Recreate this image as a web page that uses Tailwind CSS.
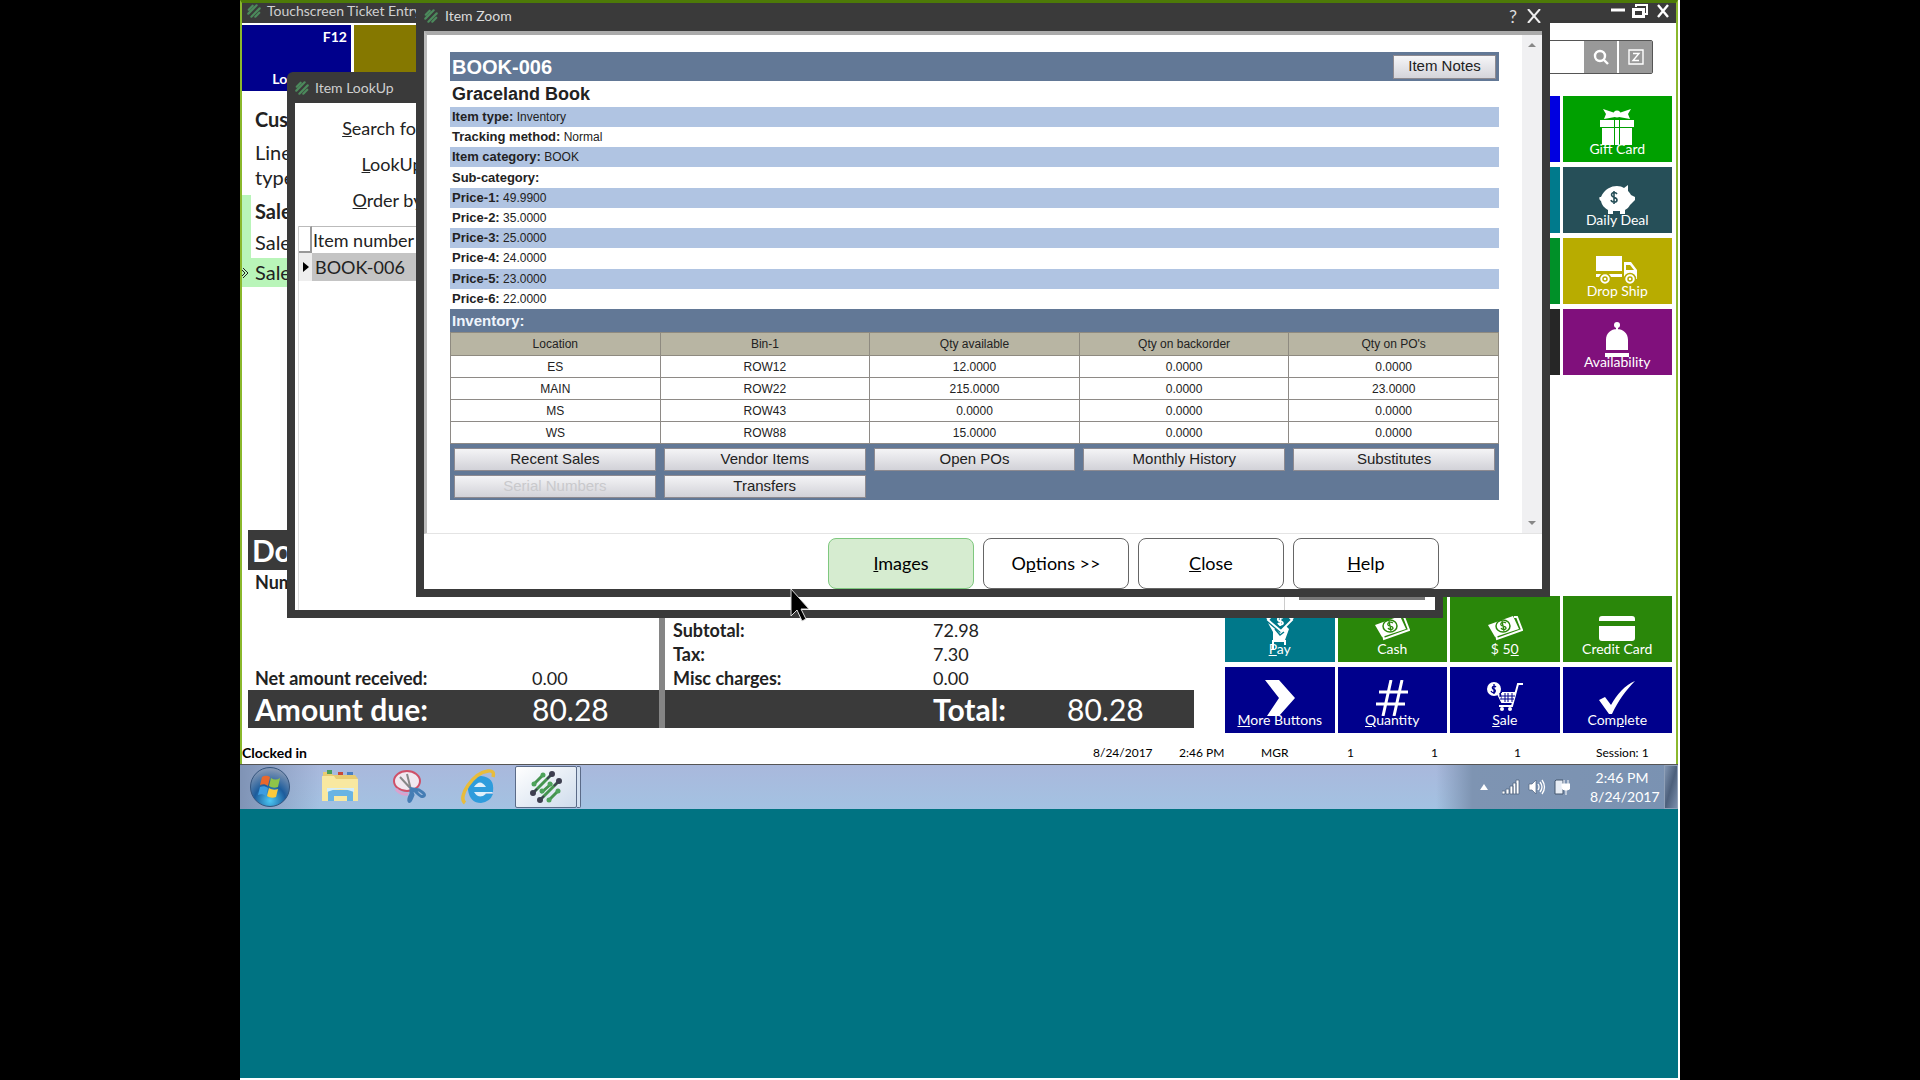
<!DOCTYPE html>
<html lang="en">
<head>
    <meta charset="UTF-8">
    <meta name="viewport" content="width=device-width, initial-scale=1.0">
    <title>Touchscreen Ticket Entry</title>
    <script src="https://cdn.jsdelivr.net/npm/@tailwindcss/browser@4"></script>
</head>
<body class="bg-black font-['Lato',sans-serif] text-[#222]">
    <!-- Shared icons -->
    <svg class="hidden">
        <symbol id="logo" viewBox="0 0 32 32">
            <g stroke="#45944f" stroke-width="3" stroke-linecap="round">
                <path d="M13 4L4 13M22 3L3 22M21 13L12 21M29 10L10 29M28 20l-9 9"/>
            </g>
            <g fill="#4da35a"><circle cx="13" cy="4" r="2.500"/><circle cx="4" cy="13" r="2.500"/><circle cx="20" cy="13" r="2.500"/><circle cx="12" cy="20" r="2.500"/><circle cx="28" cy="20" r="2.500"/><circle cx="19" cy="29" r="2.500"/></g>
            <g fill="#3d3f50" stroke="#3d3f50" stroke-width="2"><circle cx="22" cy="3" r="2"/><circle cx="29" cy="10" r="2"/><circle cx="3" cy="22" r="2"/><circle cx="10" cy="29" r="2"/><path d="M22 3l-5 5M29 10l-5 5M3 22l4-4M10 29l4-4"/></g>
        </symbol>
        <symbol id="logo-small" viewBox="0 0 32 32">
            <path d="M13 4L4 13M22 3L3 22M29 10L10 29M28 20l-9 9" stroke="#4c8a5c" stroke-width="5" stroke-linecap="round"/>
        </symbol>
        <symbol id="bills" viewBox="0 0 36 26">
            <path d="M9 20l1 4 25-9-5-13-3 0" fill="none" stroke="#fff" stroke-width="2"/>
            <path d="M1 10L26 1l6 13-24 8z" fill="#fff"/>
            <ellipse cx="16" cy="11" rx="7" ry="6" fill="none" stroke="#2a870a" stroke-width="1.5"/>
            <path d="M19 8c-3-2-6 0-5 2s5 1 5 3-4 2-5 0M15 6l2 10" fill="none" stroke="#2a870a" stroke-width="1.3"/>
        </symbol>
    </svg>

    <div class="relative mx-auto flex h-screen w-3/4 flex-col border-r-2 border-b-2 border-white bg-[#007382]">

        <!-- Ticket entry window -->
        <div class="flex h-[764px] flex-col border-x-2 border-t-3 border-x-[#8ab82c] border-t-[#4d7a08] bg-white">
            <div class="flex h-5 shrink-0 items-center bg-[#3a3a3a] pb-1 text-[#cfcfcf]">
                <svg class="ml-[5px] h-3.5 w-3.5"><use href="#logo-small"/></svg>
                <h1 class="ml-1.5 flex-1 text-[14px] leading-4">Touchscreen Ticket Entry</h1>
                <button aria-label="Minimize" class="mr-1.5"><svg class="h-4 w-4" viewBox="0 0 16 16"><path d="M1 7h14" stroke="#fff" stroke-width="3"/></svg></button>
                <button aria-label="Restore" class="mr-2"><svg class="h-4 w-4" viewBox="0 0 16 16" fill="none" stroke="#fff"><path d="M4 4V2h11v9h-2" stroke-width="2"/><path d="M1.5 6.5h10v7h-10z" stroke-width="3"/></svg></button>
                <button aria-label="Exit" class="mr-1.5"><svg class="h-4 w-3.5" viewBox="0 0 14 16"><path d="M2 2l10 12M12 2L2 14" stroke="#fff" stroke-width="2.4"/></svg></button>
            </div>

            <div class="flex min-h-0 flex-1 gap-[3px] pt-0.5 pr-1">
                <div class="flex flex-1 flex-col pb-3">
                    <div class="flex h-[66px] gap-[3px]">
                        <button class="flex w-[109px] flex-col justify-between bg-[#00008c] pt-1 pb-1 text-[14px] leading-4 font-bold text-white">
                            <span class="self-end pr-1">F12</span>
                            <span class="self-center">LookUp</span>
                        </button>
                        <button aria-label="Item" class="w-[109px] bg-[#857800]"></button>
                    </div>
                    <p class="mt-4 pl-[13px] text-[20px] leading-6 font-bold">Customer</p>
                    <table class="mt-[9px] w-full border-separate border-spacing-0 text-left text-[20px]">
                        <thead>
                            <tr><th class="block w-16 pl-[13px] pb-[5px] leading-[25px] font-normal">Line type</th></tr>
                        </thead>
                        <tbody>
                            <tr><td class="h-8 border-l-9 border-[#b9f5b9] pl-1 leading-8 font-bold">Sale</td></tr>
                            <tr><td class="h-[31px] border-l-9 border-[#b9f5b9] pl-1 leading-[31px]">Sale</td></tr>
                            <tr><td class="flex h-[29px] items-center bg-[#b9f5b9] leading-[29px]">
                                <svg class="mr-1.5 h-3 w-[7px]" viewBox="0 0 7 12" fill="none" stroke="#222"><path d="M1 1l5 5-5 5M0 3l3 3-3 3"/></svg>Sale
                            </td></tr>
                        </tbody>
                    </table>

                    <!-- Totals -->
                    <div class="mt-auto mr-7 ml-1.5 grid h-[198px] grid-cols-[411fr_6px_529fr] text-[18px] leading-6">
                        <div class="flex flex-col">
                            <h2 class="h-10 bg-[#3a3a3a] pl-1 text-[30px] leading-10 font-bold text-white">Document</h2>
                            <p class="flex-1 pl-[7px] font-bold">Number of lines:</p>
                            <dl class="grid grid-cols-[277px_1fr] pl-[7px]">
                                <dt class="font-bold">Net amount received:</dt><dd>0.00</dd>
                            </dl>
                            <dl class="grid grid-cols-[277px_1fr] bg-[#3a3a3a] pl-[7px] text-[30px] leading-[38px] text-white">
                                <dt class="font-bold">Amount due:</dt><dd>80.28</dd>
                            </dl>
                        </div>
                        <div class="bg-[#858585]"></div>
                        <div class="flex flex-col justify-end">
                            <dl class="grid grid-cols-[260px_1fr] pl-2">
                                <dt class="font-bold">Subtotal:</dt><dd>72.98</dd>
                                <dt class="font-bold">Tax:</dt><dd>7.30</dd>
                                <dt class="font-bold">Misc charges:</dt><dd>0.00</dd>
                            </dl>
                            <dl class="grid grid-cols-[134px_1fr] bg-[#3a3a3a] pl-[268px] text-[30px] leading-[38px] text-white">
                                <dt class="font-bold">Total:</dt><dd>80.28</dd>
                            </dl>
                        </div>
                    </div>
                </div>

                <!-- Touch buttons -->
                <div class="flex w-[447px] flex-col pb-[7px] text-[14px] leading-4 text-white">
                    <div class="mt-[15px] mr-[19px] flex h-[34px] self-end rounded-xs border border-[#555] bg-white">
                        <input aria-label="Search" class="w-[180px] text-black">
                        <button aria-label="Find" class="flex w-[35px] items-center justify-center border-r-2 border-white bg-[#999]"><svg class="h-4 w-4" viewBox="0 0 16 16" fill="none" stroke="#fff" stroke-width="2.4"><circle cx="7" cy="7" r="5"/><path d="M11 11l4 4"/></svg></button>
                        <button aria-label="Zoom" class="flex w-[33px] items-center justify-center bg-[#999]"><svg class="h-4 w-4" viewBox="0 0 16 16" fill="none" stroke="#fff" stroke-width="1.4"><path d="M1 1h14v14H1zM5 4.500h6L5 11.500h6"/></svg></button>
                    </div>

                    <div class="mt-[22px] grid grid-cols-4 gap-x-[3px] gap-y-[5px]">
                        <button aria-label="Sale type" class="col-start-3 h-[66px] bg-[#0000e0]"></button>
                        <button class="flex h-[66px] flex-col items-center justify-end bg-[#00a000] pb-[5px]">
                            <svg class="-mb-1 h-9 w-9" viewBox="0 0 36 36" fill="#fff"><path d="M4 0l12 4v4L5 10 7 5zM32 0L20 4v4l11 2-2-5z"/><circle cx="18" cy="5" r="3.500"/><path d="M1 11h34v7H1zM3 19h30v17H3z"/><path d="M15.500 11v25M20.500 11v25" stroke="#00a000"/></svg>
                            <span>Gift Card</span>
                        </button>
                        <button aria-label="Order" class="col-start-3 h-[66px] bg-[#007a8c]"></button>
                        <button class="flex h-[66px] flex-col items-center justify-end bg-[#264f58] pb-[5px]">
                            <svg class="-mb-0.5 h-[29px] w-9" viewBox="0 0 36 29" fill="#fff"><path d="M1 12c-1 0-1 3 1 4 1 5 4 7 7 9v4h5v-3h7v3h5v-4c2-1 4-3 5-5l5-5v-3l-4-2c-1-2-2-3-3-4V0l-4 3C20-1 7 0 2 12z"/><path d="M18 9c-2-3-7-1-5 2 1 2 5 1 5 4s-5 3-6 0M15 6v13" fill="none" stroke="#264f58" stroke-width="1.600"/></svg>
                            <span>Daily Deal</span>
                        </button>
                        <button aria-label="Layaway" class="col-start-3 h-[66px] bg-[#009028]"></button>
                        <button class="flex h-[66px] flex-col items-center justify-end bg-[#b8ac00] pb-[5px]">
                            <svg class="-mb-0.5 h-[29px] w-[42px]" viewBox="0 0 42 29"><path d="M0 0h26v15H0zM0 18h26v3H0zM28 6h7l6 8v9H28z" fill="#fff"/><path d="M30 9h4l4 5h-8z" fill="#b8ac00"/><g fill="#fff" stroke="#b8ac00" stroke-width="1.500"><circle cx="9" cy="23" r="5.500"/><circle cx="34" cy="23" r="5.500"/><circle cx="9" cy="23" r="2"/><circle cx="34" cy="23" r="2"/></g></svg>
                            <span>Drop Ship</span>
                        </button>
                        <button aria-label="Tools" class="col-start-3 h-[66px] bg-[#262626]"></button>
                        <button class="flex h-[66px] flex-col items-center justify-end bg-[#80107c] pb-[5px]">
                            <svg class="-mb-1 h-9 w-6" viewBox="0 0 24 36" fill="#fff"><circle cx="12" cy="3" r="3"/><path d="M11 5h2v3h-2zM1 28V18C1 11 6 7 12 7s11 4 11 11v10zM0 31h24v4H0z"/></svg>
                            <span>Availability</span>
                        </button>
                    </div>

                    <div class="mt-auto grid grid-cols-4 gap-x-[3px] gap-y-[5px]">
                        <button class="flex h-[66px] flex-col items-center justify-end bg-[#00788a] pb-[5px]">
                            <svg class="-mb-2 h-[38px] w-7" viewBox="0 0 28 38" fill="none"><path d="M1 8l6-5M27 8l-6-6" stroke="#fff" stroke-width="3"/><path d="M7 3l7-2 7 2 5 6-11 11L2 9z" stroke="#fff" stroke-width="2"/><path d="M17 7c-3-2-6 0-5 2s5 1 5 3-4 2-5 0M15 4l-1 11" stroke="#fff" stroke-width="1.800"/><path d="M2 12l5 9v8h12l4-11-3-3-6 7z" fill="#fff"/><path d="M9 18l5 6 4-3" stroke="#00788a" stroke-width="1.500"/><path d="M6 30h14M7 30v8M19 30v4" stroke="#fff" stroke-width="2"/></svg>
                            <span><u>P</u>ay</span>
                        </button>
                        <button class="flex h-[66px] flex-col items-center justify-end bg-[#2a870a] pb-[5px]">
                            <svg class="h-[26px] w-9"><use href="#bills"/></svg>
                            <span>Cash</span>
                        </button>
                        <button class="flex h-[66px] flex-col items-center justify-end bg-[#2a870a] pb-[5px]">
                            <svg class="h-[26px] w-9"><use href="#bills"/></svg>
                            <span>$ 5<u>0</u></span>
                        </button>
                        <button class="flex h-[66px] flex-col items-center justify-end bg-[#2a870a] pb-[5px]">
                            <svg class="h-[25px] w-9" viewBox="0 0 36 25" fill="#fff"><path d="M0 5V3q0-3 3-3h30q3 0 3 3v2zM0 10h36v12q0 3-3 3H3q-3 0-3-3z"/></svg>
                            <span>Credit Card</span>
                        </button>
                        <button class="flex h-[66px] flex-col items-center justify-end bg-[#00008c] pb-[5px]">
                            <svg class="-mb-1 h-9 w-[30px]" viewBox="0 0 30 36" fill="#fff"><path d="M0 0h14l16 18-16 18H2l12-18z"/></svg>
                            <span><u>M</u>ore Buttons</span>
                        </button>
                        <button class="flex h-[66px] flex-col items-center justify-end bg-[#00008c] pb-[5px]">
                            <svg class="-mb-1 h-9 w-8" viewBox="0 0 32 36" fill="none" stroke="#fff" stroke-width="3"><path d="M15 0L7 36M26 0l-8 36M3 12h29M0 24h29"/></svg>
                            <span><u>Q</u>uantity</span>
                        </button>
                        <button class="flex h-[66px] flex-col items-center justify-end bg-[#00008c] pb-[5px]">
                            <svg class="h-[30px] w-9" viewBox="0 0 36 30"><circle cx="7" cy="7" r="7" fill="#fff"/><path d="M9 5c-2-2-5 0-3 2 2 1 3 1 2 3-1 1-3 1-4-1M7 2v10" fill="none" stroke="#00008c" stroke-width="1.300"/><path d="M36 2h-5l-6 22H12M15 11h13M11 12l4 8h11" fill="none" stroke="#fff" stroke-width="2"/><path d="M14 11h14l-2 9H15z" fill="#fff"/><path d="M12 14h16M13 17h14M18 11v9M21 11v9M25 11v9" stroke="#00008c"/><circle cx="15" cy="27" r="2" fill="#fff"/><circle cx="23" cy="27" r="2" fill="#fff"/></svg>
                            <span><u>S</u>ale</span>
                        </button>
                        <button class="flex h-[66px] flex-col items-center justify-end bg-[#00008c] pb-[5px]">
                            <svg class="-mb-0.5 h-[33px] w-9" viewBox="0 0 36 33" fill="#fff"><path d="M0 19l6-3 6 8C18 13 26 4 36 0 27 9 19 20 13 33h-3z"/></svg>
                            <span>Com<u>p</u>lete</span>
                        </button>
                    </div>
                </div>
            </div>

            <div class="grid h-6 grid-cols-[1fr_86px_82px_86px_84px_83px_82px_80px] items-center pt-0.5 text-[12px] leading-5 text-black">
                <b class="text-[14px]">Clocked in</b>
                <span>8/24/2017</span>
                <span>2:46 PM</span>
                <span>MGR</span>
                <span>1</span>
                <span>1</span>
                <span>1</span>
                <span class="whitespace-nowrap">Session: 1</span>
            </div>
        </div>

        <!-- Taskbar -->
        <div class="flex h-[45px] items-center border-t border-[#555] bg-linear-to-b from-[#a9b8dc] to-[#a3c2e2]">
            <div class="flex h-full w-20 items-center bg-linear-to-r from-[#7f93b5] to-transparent pl-2.5">
                <button aria-label="Start">
                    <svg class="h-10 w-10" viewBox="0 0 40 40">
                        <defs><radialGradient id="orb" cx="50%" cy="85%" r="80%"><stop offset="0" stop-color="#4cc8f4"/><stop offset=".5" stop-color="#1c5c9c"/><stop offset="1" stop-color="#8497b4"/></radialGradient></defs>
                        <circle cx="20" cy="20" r="19.500" fill="url(#orb)" stroke="#34557e"/>
                        <path d="M12 10c3-2 6-1 8 0l-2 9c-3-2-5-2-8-1z" fill="#e9682c"/><path d="M21 11c3 2 6 2 9 0l-2 9c-3 1-6 1-9-1z" fill="#8fc449"/><path d="M10 20c3-1 5-1 8 1l-2 8c-3-2-5-2-8-1z" fill="#3d9de0"/><path d="M19 21c3 2 6 2 9 1l-2 8c-3 1-6 1-9-1z" fill="#fcca3c"/>
                    </svg>
                </button>
            </div>
            <button aria-label="Explorer">
                <svg class="h-9 w-10" viewBox="0 0 40 36"><path d="M3 3h8l2 3h22l3 4v22H3z" fill="#e8cc72"/><path d="M7 1h5v4H7z" fill="#4a9e58"/><path d="M18 3h5v3h-5z" fill="#c84a38"/><path d="M27 3h6v3h-6z" fill="#4c80c0"/><path d="M2 7h12l2 3h22v22H2z" fill="#f8e8a0"/><path d="M8 32V21h25v11h-6v-5H14v5z" fill="#68b4e4"/><path d="M7 23q13-6 27 0v-4H7z" fill="#d4eefa"/></svg>
            </button>
            <button aria-label="Snipping Tool" class="ml-8">
                <svg class="h-9 w-9" viewBox="0 0 36 36" fill="none"><ellipse cx="15" cy="12" rx="13" ry="10" fill="#f1e8f0" stroke="#cf5068" stroke-width="2"/><path d="M4 20q4 6 12 5" stroke="#dca0cc" stroke-width="3"/><path d="M8 8l12 13M15 5l4 16" stroke="#888" stroke-width="2"/><path d="M19 20l2 6q-3 8-4 6t2-7zM21 20l6 1q7 4 5 6t-7-3z" stroke="#457db4" stroke-width="3"/></svg>
            </button>
            <button aria-label="Internet Explorer" class="ml-[33px]">
                <svg class="h-9 w-9" viewBox="0 0 36 36" fill="none"><path d="M19 13a7 7 0 0 1 7 5H12a7 7 0 0 1 7-5M31 24H25A7 7 0 0 1 12 22H32" fill="#dff0fb"/><path d="M25 25Q18 31 13 23H32Q34 8 20 7 7 8 7 21 9 34 20 34 29 33 32 25zM13 18q6-9 12 0z" fill="#2e9cdc" fill-rule="evenodd"/><path d="M4 34C-4 28 12 4 27 2q7-1 5 6" stroke="#e8bc3c" stroke-width="3.500"/></svg>
            </button>
            <button aria-label="Ticket Entry" class="ml-[18px] flex h-[42px] w-[62px] items-center justify-center rounded-xs border border-[#5b6b88] bg-linear-to-br from-white to-[#cfdcec]">
                <svg class="h-8 w-8"><use href="#logo"/></svg>
            </button>
            <div class="h-[42px] w-1 rounded-r-xs border border-l-0 border-[#5b6b88] bg-[#d3e0f0]"></div>
            <div class="ml-auto flex h-full items-center bg-linear-to-r from-transparent via-[#7e94b2] via-15% to-[#7a92b2] pl-11 text-white">
                <button aria-label="Show hidden icons"><svg class="h-1.5 w-2" viewBox="0 0 8 6"><path d="M0 6l4-6 4 6z" fill="#fff"/></svg></button>
                <svg class="ml-3.5 h-4 w-[18px]" viewBox="0 0 18 16" fill="#fff" stroke="#506480" stroke-width=".8"><path d="M0 12h3v3H0zM4 10h3v5H4zM8 7h3v8H8zM11 4h3v11h-3zM14 1h3v14h-3z"/></svg>
                <svg class="ml-2 h-4 w-[18px]" viewBox="0 0 18 16"><path d="M1 5h3l4-4v14l-4-4H1z" fill="#fff" stroke="#506480" stroke-width=".7"/><path d="M10 5q2 3 0 6M12 3q4 5 0 10M14 1q5 7 0 14" fill="none" stroke="#fff" stroke-width="1.300"/></svg>
                <svg class="ml-2 h-[18px] w-4" viewBox="0 0 16 18"><path d="M2 2h7v14H1V3z" fill="#e7edf5" stroke="#44566e"/><path d="M10 2v4M14 2v4M8 6h8v3q0 3-3 3h-2q-3 0-3-3zM12 12v5" fill="#fff" stroke="#fff"/></svg>
                <div class="ml-5 w-16 text-center text-[14px] leading-[19px]">2:46 PM<br>8/24/2017</div>
                <button aria-label="Show desktop" class="ml-2.5 h-11 w-3.5 border border-[#8fa0b8] bg-linear-to-br from-[#8296b2] via-[#4d607c] to-[#7b8fac]"></button>
            </div>
        </div>

        <!-- Item LookUp dialog -->
        <section class="absolute top-[72px] right-[235px] left-[47px] h-[546px] rounded-t-md border-8 border-t-0 border-[#3a3a3a] bg-[#3a3a3a]">
            <div class="flex h-[31px] items-center text-[#cfcfcf]">
                <svg class="h-3.5 w-3.5"><use href="#logo-small"/></svg>
                <h2 class="ml-1.5 text-[14px]">Item LookUp</h2>
            </div>
            <div class="flex h-[507px] flex-col bg-white pt-[7px] text-[18px]">
                <div class="grid grid-cols-[132px_200px] text-right leading-9">
                    <label for="search"><u>S</u>earch for:</label><input id="search">
                    <label for="lookup"><u>L</u>ookUp:</label><input id="lookup">
                    <label for="order"><u>O</u>rder by:</label><input id="order">
                </div>
                <table class="mt-2 ml-[3px] border-separate border-spacing-0 border-l border-[#ccc] text-left">
                    <thead>
                        <tr><th class="h-[27px] w-[13px] border-t border-r-2 border-b-2 border-[#999] border-t-[#bbb]"></th><th class="border-t border-[#bbb] pl-px leading-[26px] font-normal">Item number</th></tr>
                    </thead>
                    <tbody>
                        <tr><td class="h-7 bg-[#eee] pl-1"><svg class="h-2.5 w-1.5" viewBox="0 0 6 10"><path d="M0 0l6 5-6 5z"/></svg></td><td class="bg-[#c4c4c4] pl-[3px]">BOOK-006</td></tr>
                    </tbody>
                </table>
                <div class="ml-[3px] flex flex-1 justify-end border-l border-[#ddd]">
                    <div class="flex w-[151px] items-end border-l border-[#ccc] pb-2.5 pl-3.5"><button aria-label="Select" class="h-10 w-[126px] border-b-3 border-[#777]"></button></div>
                </div>
            </div>
        </section>

        <!-- Item Zoom dialog -->
        <section class="absolute top-[3px] right-32 left-44 border-8 border-t-0 border-[#3a3a3a] bg-white">
            <div class="flex h-7 items-center bg-[#3a3a3a] pb-0.5 text-[#dcdcdc]">
                <svg class="h-3.5 w-3.5"><use href="#logo-small"/></svg>
                <h2 class="ml-[7px] flex-1 text-[14px] leading-5">Item Zoom</h2>
                <button aria-label="About" class="mr-2.5 text-[18px] leading-5">?</button>
                <button aria-label="Close window" class="mr-px"><svg class="h-3.5 w-3.5" viewBox="0 0 14 14"><path d="M1 0l12 14M13 0L1 14" stroke="#eee" stroke-width="2"/></svg></button>
            </div>

            <div class="flex h-[503px] border-t-4 border-b border-l-3 border-t-[#aaa] border-b-[#e4e4e4] border-l-[#bbb] font-['Liberation_Sans',sans-serif]">
                <div class="flex-1 pt-[17px] pr-[23px] pl-[23px]">
                    <div class="flex h-[29px] items-center justify-between bg-[#627896] pr-[3px] pl-0.5 text-[20px] font-bold text-white">
                        <h3>BOOK-006</h3>
                        <button class="h-6 w-[103px] border border-[#8d8a90] bg-linear-to-b from-[#f6f6f8] to-[#d4d4da] pb-0.5 text-[15px] leading-5 font-normal text-[#222]">Item Notes</button>
                    </div>
                    <p class="pl-0.5 text-[18px] leading-[26px] font-bold">Graceland Book</p>
                    <ul class="grid h-[202px] auto-rows-fr items-center text-[12px] leading-5 *:pl-0.5">
                        <li class="bg-[#b0c4e2]"><b class="text-[13px]">Item type:</b> Inventory</li>
                        <li><b class="text-[13px]">Tracking method:</b> Normal</li>
                        <li class="bg-[#b0c4e2]"><b class="text-[13px]">Item category:</b> BOOK</li>
                        <li><b class="text-[13px]">Sub-category:</b></li>
                        <li class="bg-[#b0c4e2]"><b class="text-[13px]">Price-1:</b> 49.9900</li>
                        <li><b class="text-[13px]">Price-2:</b> 35.0000</li>
                        <li class="bg-[#b0c4e2]"><b class="text-[13px]">Price-3:</b> 25.0000</li>
                        <li><b class="text-[13px]">Price-4:</b> 24.0000</li>
                        <li class="bg-[#b0c4e2]"><b class="text-[13px]">Price-5:</b> 23.0000</li>
                        <li><b class="text-[13px]">Price-6:</b> 22.0000</li>
                    </ul>
                    <h4 class="h-[23px] bg-[#627896] pl-0.5 text-[15px] leading-[23px] font-bold text-[#eef4fc]">Inventory:</h4>
                    <table class="w-full table-fixed text-center text-[12px] leading-4 [&_td]:h-[22px] [&_td]:border [&_td]:border-[#8e8a86] [&_th]:h-[23px] [&_th]:border [&_th]:border-[#8e8a80] [&_th]:font-normal">
                        <thead>
                            <tr class="bg-[#b8b5a3]"><th>Location</th><th>Bin-1</th><th>Qty available</th><th>Qty on backorder</th><th>Qty on PO's</th></tr>
                        </thead>
                        <tbody>
                            <tr><td>ES</td><td>ROW12</td><td>12.0000</td><td>0.0000</td><td>0.0000</td></tr>
                            <tr><td>MAIN</td><td>ROW22</td><td>215.0000</td><td>0.0000</td><td>23.0000</td></tr>
                            <tr><td>MS</td><td>ROW43</td><td>0.0000</td><td>0.0000</td><td>0.0000</td></tr>
                            <tr><td>WS</td><td>ROW88</td><td>15.0000</td><td>0.0000</td><td>0.0000</td></tr>
                        </tbody>
                    </table>
                    <div class="grid grid-cols-5 gap-x-2 gap-y-1 bg-[#627896] px-1 pt-1 pb-0.5 text-[15px] leading-5 *:h-[23px] *:border *:border-[#8d8a90] *:bg-linear-to-b *:from-[#f4f4f6] *:to-[#d2d2d8] *:pb-0.5">
                        <button>Recent Sales</button>
                        <button>Vendor Items</button>
                        <button>Open POs</button>
                        <button>Monthly History</button>
                        <button>Substitutes</button>
                        <button disabled class="text-[#c9c9cc]">Serial Numbers</button>
                        <button>Transfers</button>
                    </div>
                </div>
                <div class="flex w-5 flex-col items-center justify-between bg-[#f0f0f2] py-2">
                    <svg class="h-1 w-2" viewBox="0 0 8 4"><path d="M0 4l4-4 4 4z" fill="#888"/></svg>
                    <svg class="h-1 w-2" viewBox="0 0 8 4"><path d="M0 0l4 4 4-4z" fill="#888"/></svg>
                </div>
            </div>

            <div class="flex justify-end gap-[9px] pt-1 pr-[103px] text-[18px] text-black *:h-[51px] *:w-[146px] *:rounded-lg *:border">
                <button class="border-[#7fc87f] bg-[#d6ecd0]"><u>I</u>mages</button>
                <button class="border-[#666]">O<u>p</u>tions &gt;&gt;</button>
                <button class="border-[#666]"><u>C</u>lose</button>
                <button class="border-[#666]"><u>H</u>elp</button>
            </div>
        </section>

        <!-- Mouse pointer -->
        <svg class="absolute top-[588px] left-[550px] h-[34px] w-5" viewBox="0 0 20 34"><path d="M1 1v27l6-6 5 11 4-2-5-10h8z" fill="#000" stroke="#ddd"/></svg>
    </div>
</body>
</html>
